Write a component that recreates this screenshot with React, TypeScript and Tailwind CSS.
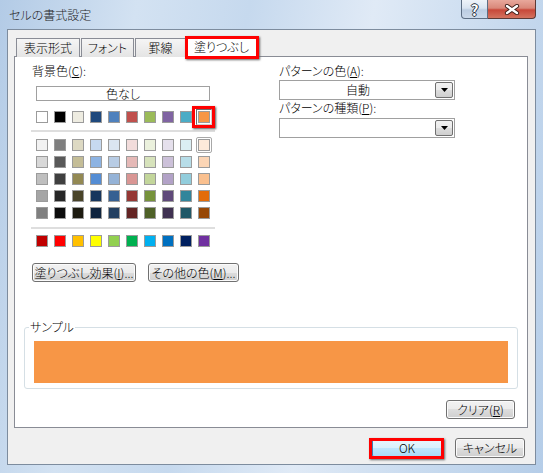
import React from "react";

const themeRow = ["#ffffff", "#000000", "#eeece1", "#1f497d", "#4f81bd", "#c0504d", "#9bbb59", "#8064a2", "#4bacc6", "#f79646"];

const tintRows = [
  ["#f2f2f2", "#7f7f7f", "#ddd9c3", "#c6d9f0", "#dbe5f1", "#f2dcdb", "#ebf1dd", "#e5e0ec", "#dbeef3", "#fdeada"],
  ["#d8d8d8", "#595959", "#c4bd97", "#8db3e2", "#b8cce4", "#e5b9b7", "#d7e3bc", "#ccc1d9", "#b7dde8", "#fbd5b5"],
  ["#bfbfbf", "#3f3f3f", "#938953", "#548dd4", "#95b3d7", "#d99694", "#c3d69b", "#b2a2c7", "#92cddc", "#fac08f"],
  ["#a5a5a5", "#262626", "#494429", "#17365d", "#366092", "#953734", "#76923c", "#5f497a", "#31859b", "#e36c09"],
  ["#7f7f7f", "#0c0c0c", "#1d1b10", "#0f243e", "#244061", "#632423", "#4f6128", "#3f3151", "#205867", "#974806"],
];

const standardRow = ["#c00000", "#ff0000", "#ffc000", "#ffff00", "#92d050", "#00b050", "#00b0f0", "#0070c0", "#002060", "#7030a0"];

const btn =
  "flex items-center justify-center rounded-[3px] border border-[#707070] bg-[linear-gradient(#f2f2f2_0%,#ebebeb_50%,#dddddd_50%,#cfcfcf_100%)] shadow-[inset_0_0_0_1px_#fbfbfb] leading-none";

const Swatch = ({ color, mark }: { color: string; mark?: "hover" | "selected" }) => (
  <div className="relative h-[12px] w-[12px] border border-[#9b9b9b]" style={{ backgroundColor: color }}>
    {mark === "hover" && (
      <div className="absolute -inset-[3px] rounded-[2px] border border-[#a8a8a8]" />
    )}
    {mark === "selected" && (
      <>
        <div className="absolute -inset-[3px] border border-[#6b6b6b] border-b-[#d0d0d0] border-r-[#d0d0d0]" />
        <div className="absolute -left-[7px] -top-[6px] h-[22px] w-[23px] border-[3px] border-[#ff0000] shadow-[1px_1px_2px_#555]" />
      </>
    )}
  </div>
);

const Dropdown = ({ value }: { value?: string }) => (
  <div className="flex h-[20px] w-[176px] items-center border border-[#a0a0a0] bg-white p-[1px]">
    <div className="flex-1 text-center leading-[14px]">{value}</div>
    <div className="flex h-[16px] w-[18px] items-center justify-center rounded-[2px] border border-[#707070] bg-[linear-gradient(#f2f2f2_0%,#ebebeb_50%,#dddddd_50%,#cfcfcf_100%)]">
      <svg width="7" height="4" viewBox="0 0 7 4">
        <path d="M0 0 H7 L3.5 4 Z" fill="#000" />
      </svg>
    </div>
  </div>
);

const Tab = ({ label, w }: { label: string; w: string }) => (
  <div
    className={`${w} flex h-[19px] items-start justify-center border border-b-0 border-[#898c95] bg-[linear-gradient(#f5f5f5,#e4e4e4)] pt-[2px] leading-[14px]`}
  >
    {label}
  </div>
);

export default function App() {
  return (
    <div className="h-[473px] w-[543px] overflow-hidden bg-[linear-gradient(100deg,#b3cbe6_0%,#d3e2f2_22%,#c6d9ee_40%,#e0eaf6_60%,#c9dbef_80%,#b5cde8_100%)] text-[12px] font-light text-black [font-family:'Noto_Sans_CJK_JP','Noto_Sans',sans-serif] [font-feature-settings:'palt']">
      <div className="flex h-[29px] items-start justify-between pr-[7px]">
        <div className="pl-[9px] pt-[8px] leading-[14px] text-[#1e1e1e]">セルの書式設定</div>
        <div className="flex">
          <div className="flex h-[19px] w-[27px] items-center justify-center rounded-bl-[4px] border border-t-0 border-[#5d6e84] bg-[linear-gradient(#eef3f9_0%,#d9e4f1_45%,#bccde2_55%,#cbd9ea_100%)] text-[15px] font-bold leading-none text-white [text-shadow:1px_0_0_#2a3442,-1px_0_0_#2a3442,0_1px_0_#2a3442,0_-1px_0_#2a3442]">
            ?
          </div>
          <div className="flex h-[19px] w-[48px] items-center justify-center rounded-br-[4px] border border-l-0 border-t-0 border-[#5d3a36] bg-[linear-gradient(#e8a89c_0%,#d9887a_45%,#c8483a_55%,#d4735f_100%)]">
            <svg width="16" height="11" viewBox="0 0 16 11">
              <path d="M3 2 L13 9 M13 2 L3 9" stroke="#3d1c17" strokeWidth="4.2" strokeLinecap="round" />
              <path d="M3 2 L13 9 M13 2 L3 9" stroke="#fff" strokeWidth="2.4" strokeLinecap="round" />
            </svg>
          </div>
        </div>
      </div>

      <div className="mx-[7px] h-[436px] border border-[#7d8c9e] bg-[#f0f0f0] pt-[6px]">
        <div className="flex h-[21px] items-end pl-[8px]">
          <Tab label="表示形式" w="w-[64px]" />
          <div className="w-[1px]" />
          <Tab label="フォント" w="w-[53px]" />
          <div className="w-[1px]" />
          <Tab label="罫線" w="w-[51px]" />
          <div className="relative z-10 flex h-[21px] w-[71px] items-start justify-center border border-b-0 border-[#898c95] bg-white pt-[3px] leading-[14px]">
            塗りつぶし
            <div className="absolute -left-[2px] -top-[1px] h-[23px] w-[74px] border-[3px] border-[#ff0000] shadow-[1px_1px_2px_#666]" />
          </div>
        </div>

        <div className="-mt-px ml-[6px] flex h-[372px] w-[514px] flex-col border border-[#898c95] bg-white">
          <div className="flex pl-[16px] pt-[7px]">
            <div className="flex w-[248px] flex-col">
              <div className="pl-[1px] leading-[14px]">
                背景色(<u>C</u>):
              </div>
              <div className="ml-[5px] mt-[8px] flex h-[15px] w-[174px] items-center justify-center border border-[#a0a0a0] leading-[13px]">
                色なし
              </div>
              <div className="ml-[5px] mt-[10px] flex gap-[6px]">
                {themeRow.map((c, i) => (
                  <Swatch key={i} color={c} mark={i === 9 ? "selected" : undefined} />
                ))}
              </div>
              <div className="mt-[7px] h-[2px] w-[184px] bg-[#dedede]" />
              <div className="ml-[5px] mt-[7px] flex flex-col gap-[5px]">
                {tintRows.map((row, r) => (
                  <div key={r} className="flex gap-[6px]">
                    {row.map((c, i) => (
                      <Swatch key={i} color={c} mark={r === 0 && i === 9 ? "hover" : undefined} />
                    ))}
                  </div>
                ))}
              </div>
              <div className="mt-[8px] h-[2px] w-[184px] bg-[#dedede]" />
              <div className="ml-[5px] mt-[6px] flex gap-[6px]">
                {standardRow.map((c, i) => (
                  <Swatch key={i} color={c} />
                ))}
              </div>
              <div className="ml-[1px] mt-[16px] flex gap-[12px]">
                <div className={`${btn} h-[19px] w-[104px]`}>
                  塗りつぶし効果(<u>I</u>)...
                </div>
                <div className={`${btn} h-[19px] w-[91px]`}>
                  その他の色(<u>M</u>)...
                </div>
              </div>
            </div>

            <div className="flex flex-col">
              <div className="leading-[14px]">
                パターンの色(<u>A</u>):
              </div>
              <div className="mt-[2px]">
                <Dropdown value="自動" />
              </div>
              <div className="mt-[1px] leading-[14px]">
                パターンの種類(<u>P</u>):
              </div>
              <div className="mt-[3px]">
                <Dropdown />
              </div>
            </div>
          </div>

          <div className="relative ml-[9px] mt-[45px] h-[62px] w-[494px] rounded-[3px] border border-[#d5dfe5] pl-[9px] pt-[13px]">
            <div className="absolute -top-[8px] left-[4px] bg-white px-[1px] leading-[14px]">サンプル</div>
            <div className="h-[42px] w-[474px] bg-[#f79646]" />
          </div>

          <div className="mt-[11px] flex justify-end pr-[12px]">
            <div className={`${btn} h-[19px] w-[69px]`}>
              クリア(<u>R</u>)
            </div>
          </div>
        </div>

        <div className="mt-[10px] flex justify-end gap-[13px] pr-[10px]">
          <div className="relative">
            <div className="flex h-[20px] w-[70px] items-center justify-center rounded-[3px] border border-[#3c7fb1] bg-[linear-gradient(#eaf6fd_0%,#d9f0fc_50%,#bee6fd_50%,#a7d9f5_100%)] leading-none">
              OK
            </div>
            <div className="absolute -left-[3px] top-0 h-[21px] w-[75px] border-[3px] border-[#ff0000] shadow-[1px_1px_2px_#666]" />
          </div>
          <div className={`${btn} h-[20px] w-[70px]`}>キャンセル</div>
        </div>
      </div>
    </div>
  );
}
